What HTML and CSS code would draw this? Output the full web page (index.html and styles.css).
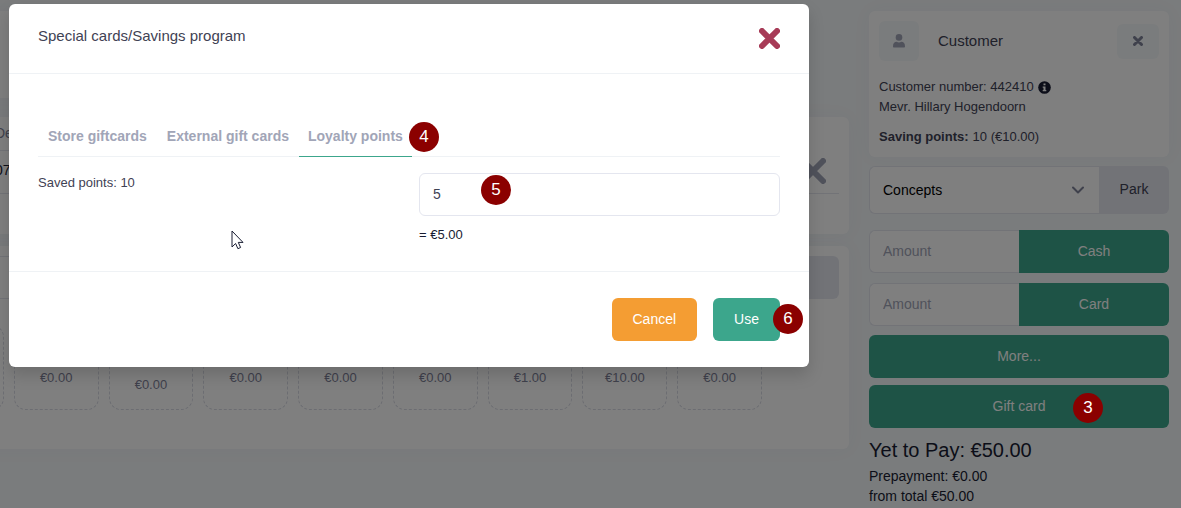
FILE: index.html
```html
<!DOCTYPE html>
<html lang="en">
<head>
<meta charset="utf-8">
<title>Special cards/Savings program</title>
<link rel="stylesheet" href="styles.css">
</head>
<body>
<div class="shell">
  <main class="main">
    <section class="card card-top"></section>
    <section class="card card-lines">
      <table class="lines">
        <thead><tr><th>De</th><td></td></tr></thead>
        <tbody><tr><td>07</td><td class="lines-action">
          <button class="remove" type="button" aria-label="Remove line"><svg viewBox="0 0 26 26" width="26" height="26"><path d="M3 3 23 23M23 3 3 23"/></svg></button>
        </td></tr></tbody>
      </table>
    </section>
    <section class="card card-products">
      <div class="search">
        <input class="field search-field" type="text" aria-label="Search product">
        <button class="search-button" type="button" aria-label="Search"></button>
      </div>
      <div class="tiles">
        <div class="tile"></div>
        <div class="tile">€0.00</div>
        <div class="tile tile-long">€0.00</div>
        <div class="tile">€0.00</div>
        <div class="tile">€0.00</div>
        <div class="tile">€0.00</div>
        <div class="tile">€1.00</div>
        <div class="tile">€10.00</div>
        <div class="tile">€0.00</div>
      </div>
    </section>
  </main>

  <aside class="side">
    <section class="card customer">
      <header class="customer-head">
        <span class="avatar"><svg viewBox="0 0 12 14" width="12" height="14"><circle cx="6" cy="3.4" r="3.3"/><path d="M0 12.4c0-3 1.3-4.6 3.7-4.6.8.4 1.5.6 2.3.6s1.500-.2 2.300-.6c2.400 0 3.700 1.600 3.700 4.600 0 .6-.4 1-1 1H1c-.6 0-1-.4-1-1z"/></svg></span>
        <h2 class="customer-title">Customer</h2>
        <button class="customer-close" type="button" aria-label="Remove customer"><svg viewBox="0 0 10 10" width="10" height="10"><path d="M1.500 1.500 8.500 8.500M8.500 1.500 1.500 8.500"/></svg></button>
      </header>
      <p class="info">Customer number: 442410 <svg class="info-icon" viewBox="0 0 13 13" width="13" height="13"><circle cx="6.500" cy="6.500" r="6.300"/><path fill="#fff" d="M5.500 2.500h2v1.800h-2zM4.700 5.400h2.800v3.600h.8v1.300H4.700V9h.8V6.700h-.8z"/></svg></p>
      <p class="info">Mevr. Hillary Hogendoorn</p>
      <p class="info info-points"><strong>Saving points:</strong> 10 (€10.00)</p>
    </section>

    <div class="group concepts">
      <div class="select-wrap">
        <select class="field select" aria-label="Concepts"><option>Concepts</option></select>
        <svg class="chevron" viewBox="0 0 12 8" width="12" height="8"><path d="M1 1.500 6 6.500 11 1.500"/></svg>
      </div>
      <button class="park" type="button">Park</button>
    </div>
    <div class="group">
      <input class="field" type="text" placeholder="Amount" aria-label="Cash amount">
      <button class="btn btn-green" type="button">Cash</button>
    </div>
    <div class="group">
      <input class="field" type="text" placeholder="Amount" aria-label="Card amount">
      <button class="btn btn-green" type="button">Card</button>
    </div>
    <div class="stack">
      <button class="btn btn-green" type="button">More...</button>
      <button class="btn btn-green marked" type="button">Gift card<span class="badge badge-gift">3</span></button>
    </div>
    <h3 class="total">Yet to Pay: €50.00</h3>
    <p class="subtotal">Prepayment: €0.00</p>
    <p class="subtotal">from total €50.00</p>
  </aside>
</div>

<div class="overlay">
  <div class="modal" role="dialog" aria-labelledby="modal-title">
    <header class="modal-head">
      <h1 class="modal-title" id="modal-title">Special cards/Savings program</h1>
      <button class="modal-close" type="button" aria-label="Close"><svg viewBox="0 0 21 21" width="21" height="21"><path d="M3 3 18 18M18 3 3 18"/></svg></button>
    </header>
    <div class="modal-body">
      <nav class="tabs">
        <a class="tab" href="#store">Store giftcards</a>
        <a class="tab" href="#external">External gift cards</a>
        <a class="tab tab-active marked" href="#loyalty">Loyalty points<span class="badge badge-tab">4</span></a>
      </nav>
      <div class="points">
        <label class="points-label" for="points">Saved points: 10</label>
        <div>
          <div class="marked">
            <input class="field points-field" id="points" type="text" value="5">
            <span class="badge badge-points">5</span>
          </div>
          <p class="points-value">= €5.00</p>
        </div>
      </div>
    </div>
    <footer class="modal-foot">
      <button class="btn btn-orange" type="button">Cancel</button>
      <button class="btn btn-green marked" type="button">Use<span class="badge badge-use">6</span></button>
    </footer>
  </div>
  <svg class="cursor" viewBox="0 0 13 20" width="13" height="20"><path d="M1 1v16l3.600-3.500 2.300 5.200 2.700-1.200-2.300-5.100H12z"/></svg>
</div>
</body>
</html>
```
FILE: styles.css
```css
* {
  box-sizing: border-box;
}

body {
  margin: 0;
  min-height: 100vh;
  overflow: hidden;
  position: relative;
  background: #f5f8fa;
  color: #181c32;
  font: 13px/20px "Liberation Sans", Arial, sans-serif;
}

h1, h2, h3, p {
  margin: 0;
  font-weight: 400;
}

button, input, select {
  margin: 0;
  padding: 0;
  border: 0;
  font: inherit;
  color: inherit;
}

svg {
  display: block;
}

/* Page behind the dialog */
.shell {
  display: grid;
  grid-template-columns: minmax(0, 1fr) 300px;
  gap: 20px;
  height: 100vh;
  padding: 11px 12px 0 0;
  overflow: hidden;
}

.main {
  display: flex;
  flex-direction: column;
  margin-left: -91px;
}

.card {
  background: #fff;
  border-radius: 6px;
  box-shadow: 0 0 20px rgba(76, 87, 125, 0.04);
}

.card-top {
  width: 80%;
  height: 87px;
  margin-bottom: 19px;
}

.card-lines {
  height: 117px;
  margin-bottom: 12px;
  padding: 0 10px 0 86px;
}

.lines {
  width: 100%;
  border-collapse: collapse;
}

.lines th,
.lines td {
  padding: 0;
  text-align: left;
}

.lines th {
  height: 33px;
  border-bottom: 1px solid #e4e6ef;
  color: #7e8299;
  font-size: 14px;
  font-weight: 400;
}

.lines tbody td {
  height: 43px;
  padding-bottom: 4px;
  border-bottom: 1px solid #e4e6ef;
  font-size: 14px;
}

.lines tbody .lines-action {
  width: 52px;
  padding-bottom: 0;
}

.remove {
  display: block;
  margin-left: auto;
  margin-right: 13px;
  background: none;
}

.remove path {
  stroke: #a1a5b7;
  stroke-width: 6;
  stroke-linecap: round;
}

.card-products {
  padding: 10px 10px 39px;
}

.search {
  display: flex;
}

.field {
  width: 100%;
  min-width: 0;
  height: 43px;
  padding: 0 13px 2px;
  border: 1px solid #e4e6ef;
  border-radius: 6px;
  background: #fff;
  font-size: 14px;
}

.field::placeholder {
  color: #a1a5b7;
  opacity: 1;
}

.search-field {
  border-radius: 6px 0 0 6px;
}

.search-button {
  width: 70px;
  border-radius: 0 6px 6px 0;
  background: #e4e6ef;
}

.tiles {
  display: grid;
  grid-template-columns: repeat(9, 1fr);
  gap: 10px;
  margin: 26px 77px 0 0;
}

.tile {
  display: flex;
  align-items: flex-end;
  justify-content: center;
  height: 85px;
  padding-bottom: 21px;
  border: 1px dashed #d8dae4;
  border-radius: 12px;
  color: #7e8299;
}

.tile-long {
  padding-bottom: 14px;
}

/* Customer and payment column */
.customer {
  padding: 10px 10px 10px;
  margin-bottom: 9px;
}

.customer-head {
  display: flex;
  align-items: center;
  margin-bottom: 16px;
}

.avatar {
  display: grid;
  place-items: center;
  width: 40px;
  height: 40px;
  border-radius: 6px;
  background: #f5f8fa;
  fill: #a1a5b7;
}

.customer-title {
  flex: 1;
  padding-left: 19px;
  color: #3f4254;
  font-size: 15px;
}

.customer-close {
  display: grid;
  place-items: center;
  width: 42px;
  height: 35px;
  border-radius: 6px;
  background: #f5f8fa;
}

.customer-close path {
  stroke: #7e8299;
  stroke-width: 3;
  stroke-linecap: round;
}

.info {
  display: flex;
  align-items: center;
  gap: 4px;
  color: #3f4254;
}

.info-icon {
  fill: #181c32;
}

.info-points {
  margin-top: 10px;
}

.group {
  display: grid;
  grid-template-columns: 1fr 1fr;
  margin-bottom: 10px;
}

.group .field {
  border-right: 0;
  border-radius: 6px 0 0 6px;
}

.group .btn {
  border-radius: 0 6px 6px 0;
}

.concepts {
  grid-template-columns: 1fr 70px;
  margin-bottom: 16px;
}

.select-wrap {
  position: relative;
}

.group .select {
  height: 48px;
  padding-bottom: 0;
  appearance: none;
  color: #000;
}

.chevron {
  position: absolute;
  top: 20px;
  right: 15px;
  pointer-events: none;
}

.chevron path {
  fill: none;
  stroke: #7e8299;
  stroke-width: 2;
  stroke-linecap: round;
  stroke-linejoin: round;
}

.park {
  padding-bottom: 2px;
  border-radius: 0 6px 6px 0;
  background: #e4e6ef;
  color: #3f4254;
  font-size: 14px;
}

.btn {
  height: 43px;
  padding: 0 20px 2px;
  border-radius: 6px;
  color: #fff;
  font-size: 14px;
}

.btn-green {
  background: #3ca68c;
}

.btn-orange {
  background: #f49d33;
}

.stack {
  display: grid;
  gap: 7px;
  margin-top: -1px;
  margin-bottom: 10px;
}

.total {
  margin-bottom: 4px;
  font-size: 20px;
  line-height: 24px;
}

.subtotal {
  font-size: 14px;
}

/* Dialog */
.overlay {
  position: absolute;
  inset: 0;
  z-index: 1;
  padding: 4px 9px;
  background: rgba(0, 0, 0, 0.5);
}

.modal {
  width: 100%;
  max-width: 800px;
  border-radius: 6px;
  background: #fff;
  box-shadow: 0 8px 16px rgba(0, 0, 0, 0.15);
}

.modal-head {
  display: flex;
  justify-content: space-between;
  align-items: center;
  height: 70px;
  padding: 0 29px;
  border-bottom: 1px solid #eff2f5;
}

.modal-title {
  padding-bottom: 6px;
  color: #3f4254;
  font-size: 15px;
}

.modal-close {
  background: none;
}

.modal-close path {
  stroke: #a73b57;
  stroke-width: 6;
  stroke-linecap: round;
}

.modal-body {
  padding: 52px 29px 26px;
}

.tabs {
  display: flex;
  margin-bottom: 16px;
  border-bottom: 1px solid #eff2f5;
}

.tab {
  height: 31px;
  margin-bottom: -1px;
  padding: 0 10px;
  color: #a1a5b7;
  font-size: 14px;
  font-weight: 700;
  text-decoration: none;
}

.tab-active {
  padding: 0 9px;
  border-bottom: 1px solid #3ca68c;
}

.points {
  display: grid;
  grid-template-columns: 1fr 1fr;
  gap: 20px;
}

.points-label {
  color: #3f4254;
}

.points-field {
  display: block;
  color: #3f4254;
}

.points-value {
  margin-top: 9px;
}

.modal-foot {
  display: flex;
  justify-content: flex-end;
  gap: 16px;
  padding: 26px 29px;
  border-top: 1px solid #eff2f5;
}

.modal-foot .btn {
  padding: 0 21px 2px;
}

/* Step markers */
.marked {
  position: relative;
}

.badge {
  position: absolute;
  z-index: 2;
  width: 30px;
  height: 30px;
  border-radius: 50%;
  background: #8b0000;
  color: #fff;
  font-size: 17px;
  font-weight: 400;
  line-height: 30px;
  text-align: center;
}

.badge-gift {
  top: 8px;
  right: 66px;
}

.badge-tab {
  top: -4px;
  right: -27px;
}

.badge-points {
  top: 2px;
  left: 62px;
}

.badge-use {
  top: 6px;
  right: -23px;
}

.cursor {
  position: absolute;
  top: 230px;
  left: 231px;
  fill: #fff;
  stroke: #181c32;
}
```
